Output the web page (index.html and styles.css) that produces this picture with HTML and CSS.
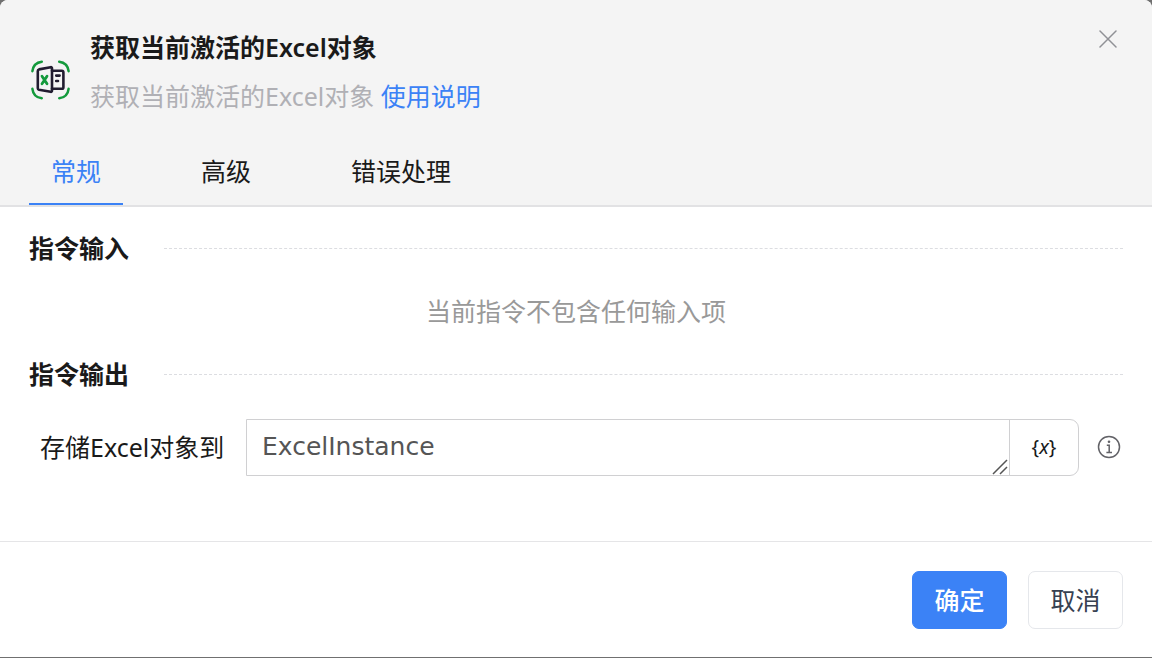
FILE: index.html
```html
<!DOCTYPE html>
<html lang="zh-CN">
<head>
<meta charset="utf-8">
<meta name="viewport" content="width=device-width, initial-scale=1">
<title>获取当前激活的Excel对象</title>
<link rel="stylesheet" href="styles.css">
</head>
<body>
<main class="dialog">
  <header class="header">
    <div class="heading">
      <svg class="logo" viewBox="0 0 40 40" fill="none" stroke-linecap="round" stroke-linejoin="round" aria-hidden="true">
        <g stroke="#149a3c" stroke-width="2.5">
          <path d="M2.4 11.2C3 6 6.2 2.4 11.8 1.7M29.2 1.7C34.8 2.4 38 6 38.6 11.2M38.6 28.8C38 34 34.8 37.6 29.2 38.2M11.8 38.2C6.2 37.6 3 34 2.4 28.8"/>
          <path stroke-width="2.8" d="M12 16.2l5 7.6M17 16.2L12 23.8"/>
        </g>
        <g stroke="#211c30" stroke-width="2.6">
          <path d="M9 9.4L20.6 7.2Q22 7 22 8.4V30.6Q22 32 20.6 31.8L9 29.8Q7.8 29.5 7.8 28.3V10.9Q7.8 9.7 9 9.4Z"/>
          <path d="M22 10.8H31.8Q33.4 10.8 33.4 12.4V27.2Q33.4 28.8 31.8 28.8H22M26.2 15.6H29.6M26.2 21H28"/>
        </g>
      </svg>
      <div class="titles">
        <h1 class="title">获取当前激活的Excel对象</h1>
        <p class="subtitle">获取当前激活的Excel对象 <a class="link" href="#">使用说明</a></p>
      </div>
      <button class="close" type="button" aria-label="关闭">
        <svg class="close-icon" viewBox="0 0 18 18" fill="none" stroke="#909196" stroke-width="1.5" stroke-linecap="round" aria-hidden="true"><path d="M1 1L17 17M17 1L1 17"/></svg>
      </button>
    </div>
    <div class="tabs" role="tablist">
      <button class="tab active" type="button" role="tab" aria-selected="true">常规</button>
      <button class="tab" type="button" role="tab" aria-selected="false">高级</button>
      <button class="tab" type="button" role="tab" aria-selected="false">错误处理</button>
    </div>
  </header>
  <div class="content">
    <h2 class="section">指令输入</h2>
    <p class="empty">当前指令不包含任何输入项</p>
    <h2 class="section">指令输出</h2>
    <div class="field">
      <label class="label" for="output">存储Excel对象到</label>
      <div class="control">
        <div class="input-box">
          <textarea class="input" id="output" rows="1" spellcheck="false">ExcelInstance</textarea>
          <svg class="grip" viewBox="0 0 16 16" stroke="#555" stroke-width="1.5" aria-hidden="true"><path d="M1 15L15 1M8 15L15 8"/></svg>
        </div>
        <button class="variable" type="button">{<i>x</i>}</button>
      </div>
      <button class="info" type="button" aria-label="说明">
        <svg class="info-icon" viewBox="0 0 24 24" fill="none" stroke="#626267" stroke-width="1.5" aria-hidden="true"><circle cx="12" cy="12" r="10.5"/><path d="M9.8 10.2H12.2V17.2M9.4 17.5H15"/><circle cx="12" cy="6.8" r="1.3" fill="#626267" stroke="none"/></svg>
      </button>
    </div>
  </div>
  <footer class="footer">
    <button class="btn primary" type="button">确定</button>
    <button class="btn" type="button">取消</button>
  </footer>
</main>
</body>
</html>
```
FILE: styles.css
```css
* {
  box-sizing: border-box;
}

body {
  margin: 0;
  background: #707070;
  color: #1a1a1a;
  font-family: "Noto Sans", "Noto Sans CJK SC", sans-serif;
  font-size: 25px;
  line-height: 36px;
}

h1,
h2,
p {
  margin: 0;
  font-size: 25px;
}

button,
textarea {
  margin: 0;
  padding: 0;
  border: 0;
  background: none;
  color: inherit;
  font: inherit;
}

button {
  cursor: pointer;
}

svg {
  display: block;
}

.dialog {
  display: flex;
  flex-direction: column;
  min-height: 100vh;
  border-bottom: 1px solid #707070;
  border-radius: 8px 8px 0 0;
  background: #fff;
  overflow: hidden;
}

.header {
  padding: 29px 29px 0;
  border-bottom: 2px solid #e2e2e4;
  background: #f4f4f4;
}

.heading {
  display: flex;
  align-items: flex-start;
  gap: 20px;
}

.logo {
  flex: none;
  width: 40px;
  height: 40px;
  margin: 31px 0 0 1px;
}

.titles {
  flex: 1;
  display: grid;
  gap: 13px;
}

.title {
  font-weight: 600;
}

.subtitle {
  color: #b0b0b5;
}

.link {
  color: #3b82f6;
  text-decoration: none;
}

.close {
  padding: 1px 6px;
}

.close-icon {
  width: 18px;
  height: 18px;
}

.tabs {
  display: flex;
  gap: 56px;
  padding-top: 24px;
}

.tab {
  height: 67px;
  padding: 0 22px;
  border-bottom: 2px solid transparent;
}

.active {
  border-color: #3b82f6;
  color: #3b82f6;
}

.content {
  flex: 1;
  padding: 23px 29px 40px;
}

.section {
  display: flex;
  align-items: center;
  gap: 35px;
  font-weight: 600;
}

.section::after {
  content: "";
  flex: 1;
  border-top: 1px dashed #dcdde1;
}

.empty {
  padding: 27px 0;
  color: #999;
  text-align: center;
}

.field {
  display: flex;
  align-items: center;
  padding: 27px 0 0 11px;
}

.label {
  flex: none;
  width: 206px;
  padding-bottom: 2px;
}

.control {
  flex: 1;
  display: flex;
  height: 57px;
  border: 1px solid #d0d0d2;
  border-radius: 0 9px 9px 0;
}

.input-box {
  position: relative;
  flex: 1;
  display: flex;
}

.input {
  width: 100%;
  height: 100%;
  padding: 9px 15px;
  color: #555;
  font-family: "DejaVu Sans", sans-serif;
  resize: none;
  outline: none;
  overflow: hidden;
}

.grip {
  position: absolute;
  right: 1px;
  bottom: 0;
  width: 16px;
  height: 16px;
}

.variable {
  width: 69px;
  padding-bottom: 2px;
  border-left: 1px solid #d0d0d2;
  font-size: 20px;
}

.info {
  margin: 0 2px 0 18px;
  padding-bottom: 2px;
}

.info-icon {
  width: 24px;
  height: 24px;
}

.footer {
  display: flex;
  justify-content: flex-end;
  gap: 21px;
  padding: 29px 29px 28px;
  border-top: 1px solid #e5e5e7;
}

.btn {
  width: 95px;
  height: 58px;
  border: 1px solid #e5e7eb;
  border-radius: 7px;
  color: #374151;
}

.primary {
  border-color: #3b82f6;
  background: #3b82f6;
  color: #fff;
  font-weight: 500;
}
```
